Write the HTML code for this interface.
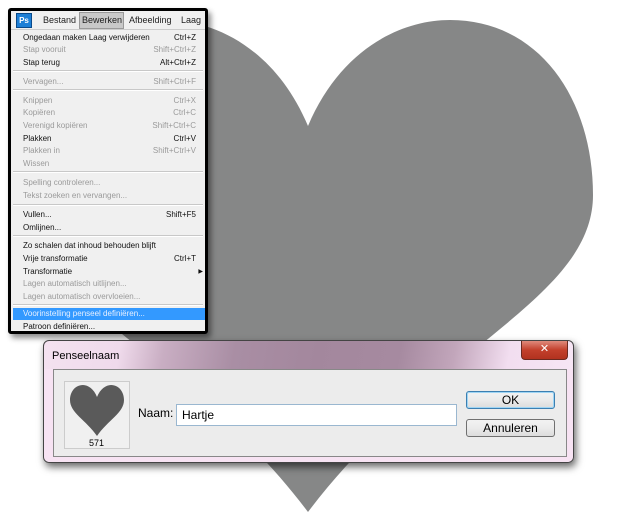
<!DOCTYPE html>
<html><head><meta charset="utf-8"><style>
body{margin:0;width:620px;height:525px;background:#fff;position:relative;overflow:hidden;font-family:"Liberation Sans","DejaVu Sans",sans-serif}
.menu{position:absolute;left:8px;top:8px;width:194px;height:320px;border:3px solid #000;border-radius:3px;background:#f0f0f0;box-shadow:3px 4px 6px rgba(0,0,0,.45);overflow:hidden}
.bar{height:18px;background:#f0f0f0;border-bottom:1px solid #ccc;position:relative;font-size:9px}
.bar span{position:absolute;top:4px;color:#222}
.ps{position:absolute;left:5px;top:2px;width:14px;height:13px;background:#1d7fd6;border:1px solid #0a4a8a;color:#fff;font-weight:bold;font-size:8px;text-align:center;line-height:13px}
.bw{position:absolute;left:68px;top:1px;width:43px;height:15px;background:#c8c8c8;border:1px solid #999}
.it{position:absolute;left:0;width:194px;height:12px;font-size:8px;line-height:12px}
.it b{font-weight:normal;position:absolute;left:12px}
.it i{font-style:normal;position:absolute;right:9px}
.d{color:#9a9a9a}.k{color:#111}
.sep{position:absolute;left:2px;width:190px;height:1px;background:#c8c8c8;border-bottom:1px solid #fff}
.dlg{position:absolute;left:43px;top:340px;width:529px;height:121px;border:1px solid #444;border-radius:6px;box-shadow:2px 4px 8px rgba(0,0,0,.6);background:linear-gradient(100deg,#f4e2f0 0%,#efdaeb 14%,#c9aec3 22%,#a98ea4 35%,#a3879d 50%,#a68aa0 65%,#c2a6bb 75%,#f2def0 85%,#f8e8f6 100%)}
.dlg .low{position:absolute;left:0;top:28px;right:0;bottom:0;background:#f7e3f3;border-radius:0 0 6px 6px}
.title{position:absolute;left:8px;top:9px;font-size:11px;color:#000}
.x{position:absolute;left:477px;top:0;width:45px;height:18px;background:linear-gradient(#e08a7c,#c3402c 50%,#b2321f);border:1px solid #6a2a20;border-top:none;border-radius:0 0 4px 4px;color:#fff;font-weight:bold;font-size:11px;text-align:center;line-height:17px}
.panel{position:absolute;left:9px;top:28px;width:512px;height:86px;background:#ececec;border:1px solid #888}
.prev{position:absolute;left:10px;top:11px;width:64px;height:66px;background:#f0f0f0;border:1px solid #ccc}
.btn{position:absolute;left:412px;width:87px;height:16px;border:1px solid #707070;border-radius:3px;background:linear-gradient(#f2f2f2,#ebebeb 50%,#dcdcdc);font-size:12px;text-align:center;line-height:16px}
</style></head><body>
<svg width="620" height="525" style="position:absolute;left:0;top:0">
<path d="M308,126 C340,50 400,20 450,20 C540,20 593,100 593,195 C593,300 430,350 308,512 C186,350 23,300 23,195 C23,100 76,20 166,20 C216,20 276,50 308,126Z" fill="#868787"/>
</svg>
<div class="menu">
<div class="bar"><div class="ps">Ps</div><div class="bw"></div><span style="left:32px">Bestand</span><span style="left:71px">Bewerken</span><span style="left:118px">Afbeelding</span><span style="left:170px">Laag</span></div>
<div class="it k" style="top:21px"><b>Ongedaan maken Laag verwijderen</b><i>Ctrl+Z</i></div>
<div class="it d" style="top:33px"><b>Stap vooruit</b><i>Shift+Ctrl+Z</i></div>
<div class="it k" style="top:46px"><b>Stap terug</b><i>Alt+Ctrl+Z</i></div>
<div class="sep" style="top:59px"></div>
<div class="it d" style="top:65px"><b>Vervagen...</b><i>Shift+Ctrl+F</i></div>
<div class="sep" style="top:78px"></div>
<div class="it d" style="top:84px"><b>Knippen</b><i>Ctrl+X</i></div>
<div class="it d" style="top:96px"><b>Kopiëren</b><i>Ctrl+C</i></div>
<div class="it d" style="top:109px"><b>Verenigd kopiëren</b><i>Shift+Ctrl+C</i></div>
<div class="it k" style="top:122px"><b>Plakken</b><i>Ctrl+V</i></div>
<div class="it d" style="top:134px"><b>Plakken in</b><i>Shift+Ctrl+V</i></div>
<div class="it d" style="top:147px"><b>Wissen</b></div>
<div class="sep" style="top:160px"></div>
<div class="it d" style="top:166px"><b>Spelling controleren...</b></div>
<div class="it d" style="top:179px"><b>Tekst zoeken en vervangen...</b></div>
<div class="sep" style="top:193px"></div>
<div class="it k" style="top:198px"><b>Vullen...</b><i>Shift+F5</i></div>
<div class="it k" style="top:211px"><b>Omlijnen...</b></div>
<div class="sep" style="top:224px"></div>
<div class="it k" style="top:229px"><b>Zo schalen dat inhoud behouden blijft</b></div>
<div class="it k" style="top:242px"><b>Vrije transformatie</b><i>Ctrl+T</i></div>
<div class="it k" style="top:255px"><b>Transformatie</b><i style="right:2px;font-size:6px">▶</i></div>
<div class="it d" style="top:267px"><b>Lagen automatisch uitlijnen...</b></div>
<div class="it d" style="top:280px"><b>Lagen automatisch overvloeien...</b></div>
<div class="sep" style="top:293px"></div>
<div class="it" style="top:297px;background:#3399ff;color:#e8f0ff;left:2px;width:192px"><b style="left:10px">Voorinstelling penseel definiëren...</b></div>
<div class="it k" style="top:310px"><b>Patroon definiëren...</b></div>
</div>
<div class="dlg">
<div class="low"></div>
<div class="title">Penseelnaam</div>
<div class="x">✕</div>
<div class="panel">
<div class="prev"><svg width="64" height="66"><path d="M32,15 C35,7 41,3 46,3 C54,3 59,10 59,18 C59,31 43,38 32,54 C21,38 5,31 5,18 C5,10 10,3 18,3 C23,3 29,7 32,15Z" fill="#5a5a5a"/><text x="24" y="64" font-size="9" font-family="Liberation Sans" fill="#000">571</text></svg></div>
<div style="position:absolute;left:84px;top:36px;font-size:12px">Naam:</div>
<div style="position:absolute;left:122px;top:34px;height:22px;background:#fff;border:1px solid #9ab7d0;font-size:12px;line-height:21px;padding-left:5px;box-sizing:border-box;width:281px">Hartje</div>
<div class="btn" style="top:21px;border-color:#3c7fb1;box-shadow:inset 0 0 0 1px #9fd5f4">OK</div>
<div class="btn" style="top:49px">Annuleren</div>
</div>
</div>
</body></html>
